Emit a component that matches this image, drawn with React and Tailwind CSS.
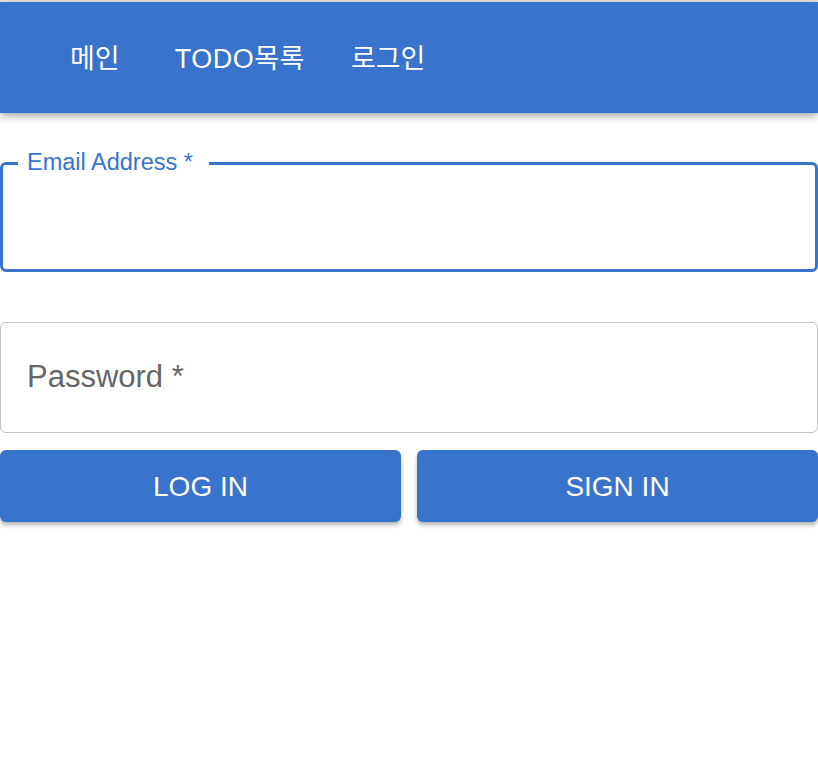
import React from "react";

const font = { fontFamily: '"Liberation Sans", "Noto Sans CJK KR", sans-serif' };

export default function App() {
  return (
    <div className="w-[818px] h-[776px] bg-white overflow-hidden" style={font}>
      <div className="h-[2px] bg-[#e4e4e4]" />
      <header className="h-[111px] bg-[#3874cb] shadow-[0_3px_8px_rgba(0,0,0,0.35)] flex items-center text-white text-[27px] relative z-10">
        <span className="ml-[70px] mt-[3px]">메인</span>
        <span className="ml-[55px] mt-[3px] tracking-[0.5px]">TODO목록</span>
        <span className="ml-[46px] mt-[3px]">로그인</span>
      </header>

      <div className="mt-[49px] relative h-[110px] border-[3px] border-[#3874cb] rounded-[6px]">
        <span className="absolute left-[15px] -top-[17px] bg-white pl-[9px] pr-[16px] text-[23.5px] leading-[28px] text-[#3874cb]">
          Email Address *
        </span>
      </div>

      <div className="mt-[50px] h-[111px] border-[1.5px] border-[#c2c2c2] rounded-[6px] flex items-center pl-[26px]">
        <span className="text-[31px] text-[#666666]">Password *</span>
      </div>

      <div className="mt-[17px] flex gap-[16px]">
        <button className="flex-1 h-[72px] bg-[#3874cb] rounded-[6px] text-white text-[28px] pt-[1px] shadow-[0_3px_4px_rgba(0,0,0,0.3)]">
          LOG IN
        </button>
        <button className="flex-1 h-[72px] bg-[#3874cb] rounded-[6px] text-white text-[28px] pt-[1px] shadow-[0_3px_4px_rgba(0,0,0,0.3)]">
          SIGN IN
        </button>
      </div>
    </div>
  );
}
